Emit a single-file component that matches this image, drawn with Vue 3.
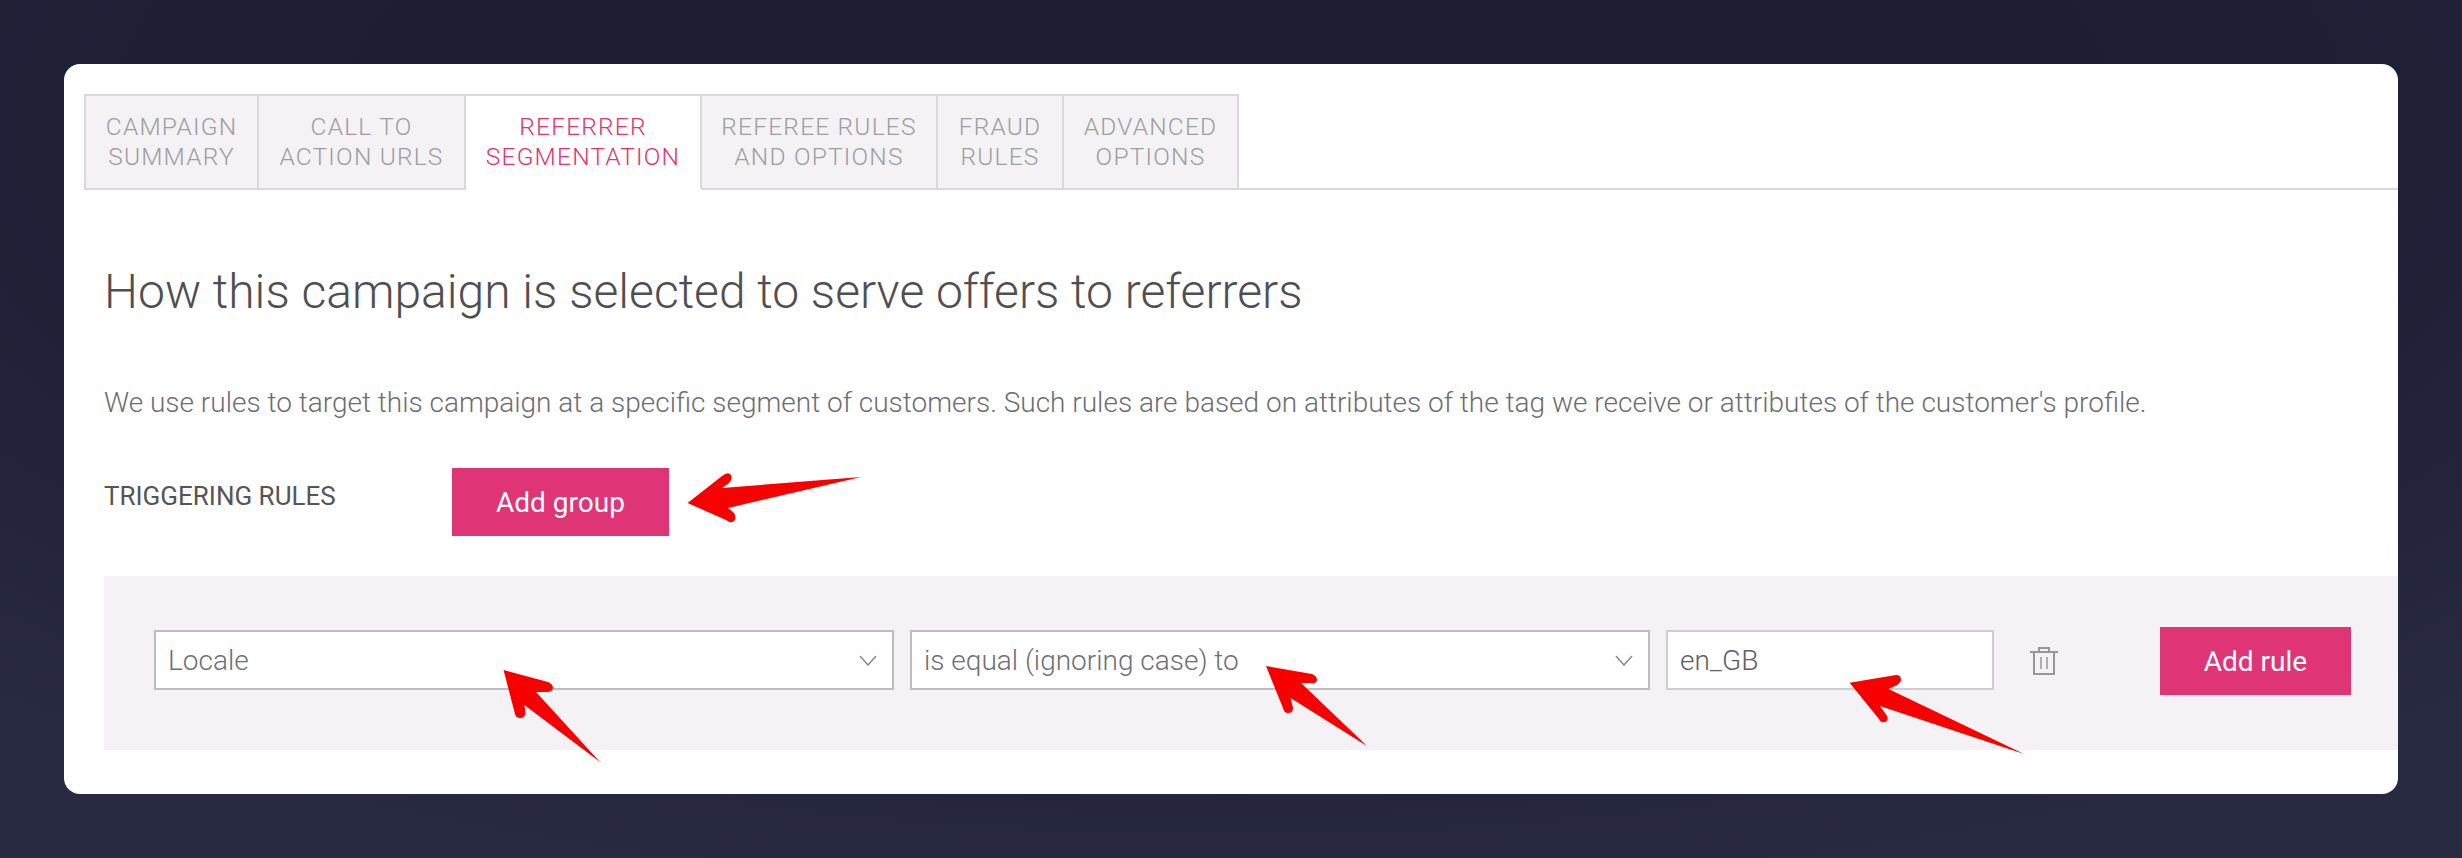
<script setup>
const tabs = [
  { lines: ['CAMPAIGN', 'SUMMARY'], width: 175 },
  { lines: ['CALL TO', 'ACTION URLS'], width: 207 },
  { lines: ['REFERRER', 'SEGMENTATION'], width: 236, active: true },
  { lines: ['REFEREE RULES', 'AND OPTIONS'], width: 236 },
  { lines: ['FRAUD', 'RULES'], width: 126 },
  { lines: ['ADVANCED', 'OPTIONS'], width: 175 }
]
const arrows = [
  'M687.6,503 L722,476 Q728,471 731,475 Q733,479 729,483 L722,488 L861,477 L728,508 L734,513 Q737,518 734,521 Q731,524 726,520 Z',
  'M503.5,670 L548,682 Q553,684 553,688 Q552,692 547,692 L536,692 L600,762 L524.4,705 L525.5,713 Q525,718 520,718 Q516,718 515,714 Z',
  'M1266,666 L1312,674 Q1317,676 1317,680 Q1316,684 1311,683 L1301,683 L1367,746 L1290.6,698 L1293,708 Q1293,713 1288,713 Q1284,713 1283,708 Z',
  'M1849.6,682.7 L1896,675 Q1901,675 1901,680 Q1900,684 1895,686 L1888.5,689 L2024,754 L1880,706 L1887,716 Q1889,720 1885,722 Q1881,723 1879,719 Z'
]
</script>

<template>
  <div class="page">
    <div class="card">
      <div class="tabs">
        <div
          v-for="tab in tabs"
          :key="tab.lines[0]"
          class="tab"
          :class="{ active: tab.active }"
          :style="{ width: tab.width + 'px' }"
        >
          <span v-for="line in tab.lines" :key="line">{{ line }}</span>
        </div>
      </div>
      <div class="content">
        <h1>How this campaign is selected to serve offers to referrers</h1>
        <p>We use rules to target this campaign at a specific segment of customers. Such rules are based on attributes of the tag we receive or attributes of the customer's profile.</p>
        <div class="trigger">
          <div class="label">TRIGGERING RULES</div>
          <button class="btn group-btn">Add group</button>
        </div>
      </div>
      <div class="panel">
        <div class="field select">
          <span>Locale</span>
          <svg width="18" height="11" viewBox="0 0 18 11"><path d="M1 1 L9 10 L17 1" fill="none" stroke="#8a8a8a" stroke-width="1.5" /></svg>
        </div>
        <div class="field select">
          <span>is equal (ignoring case) to</span>
          <svg width="18" height="11" viewBox="0 0 18 11"><path d="M1 1 L9 10 L17 1" fill="none" stroke="#8a8a8a" stroke-width="1.5" /></svg>
        </div>
        <div class="field input"><span>en_GB</span></div>
        <svg class="trash" width="30" height="30" viewBox="0 0 30 30" fill="none" stroke="#97979b" stroke-width="2">
          <path d="M1 6 H29" />
          <path d="M10 6 V2 H20 V6" />
          <path d="M5 6 V28 H25 V6" />
          <path d="M12 11 V23 M18 11 V23" stroke-width="1.5" />
        </svg>
        <button class="btn rule-btn">Add rule</button>
      </div>
    </div>
    <svg class="arrows" width="2462" height="858" viewBox="0 0 2462 858">
      <path v-for="d in arrows" :key="d" :d="d" fill="#f90000" />
    </svg>
  </div>
</template>

<style>
html, body { margin: 0; padding: 0; }
</style>

<style scoped>
.page {
  position: relative;
  box-sizing: border-box;
  width: 2462px;
  height: 858px;
  padding: 64px;
  overflow: hidden;
  font-family: Roboto, "Liberation Sans", sans-serif;
  background: radial-gradient(ellipse 75% 90% at 50% 15%, #1b1b32 0%, #1e1e35 60%, #282a42 100%);
}
.card {
  box-sizing: border-box;
  height: 730px;
  padding-top: 30px;
  background: #fff;
  border-radius: 16px;
  overflow: hidden;
}
.tabs {
  display: flex;
  box-sizing: border-box;
  height: 96px;
  margin-left: 20px;
  border-bottom: 2px solid #d9d8da;
}
.tab {
  display: flex;
  flex: none;
  flex-direction: column;
  align-items: center;
  justify-content: center;
  box-sizing: border-box;
  height: 96px;
  background: #f4f2f5;
  border: 2px solid #d9d8da;
  border-left-width: 0;
  font-size: 24.5px;
  font-weight: 300;
  line-height: 30px;
  letter-spacing: 1.2px;
  color: #9f9da1;
}
.tab:first-child { border-left-width: 2px; }
.tab.active {
  background: #fff;
  border-bottom-color: #fff;
  color: #e0356f;
}
.content { padding: 0 40px; }
h1 {
  margin: 74px 0 0;
  font-size: 48px;
  font-weight: 300;
  line-height: 56px;
  color: #4f4f52;
}
p {
  margin: 66px 0 0;
  font-size: 28px;
  font-weight: 300;
  line-height: 34px;
  color: #6d6d70;
}
.trigger {
  display: flex;
  align-items: flex-start;
  margin-top: 48px;
}
.label {
  width: 348px;
  margin-top: 13px;
  font-size: 26px;
  line-height: 30px;
  color: #555558;
}
.btn {
  box-sizing: border-box;
  height: 68px;
  border: 0;
  padding: 0;
  background: #df3576;
  color: #fff;
  font-family: inherit;
  font-size: 28px;
}
.group-btn { width: 217px; }
.rule-btn { width: 191px; margin-left: 85px; margin-top: 2px; }
.panel {
  display: flex;
  align-items: center;
  gap: 16px;
  box-sizing: border-box;
  height: 174px;
  margin-top: 40px;
  margin-left: 40px;
  padding-left: 50px;
  padding-bottom: 6px;
  background: #f4f2f5;
}
.field {
  display: flex;
  align-items: center;
  justify-content: space-between;
  box-sizing: border-box;
  height: 60px;
  padding: 0 15px 0 12px;
  background: #fff;
  border: 2px solid #bdbcbe;
  font-size: 28px;
  font-weight: 300;
  color: #6f6f72;
}
.select { width: 740px; }
.input {
  width: 328px;
  border-color: #cfcecf;
  color: #5e5e61;
}
.trash { margin-left: 19px; margin-top: 2px; }
.arrows {
  position: absolute;
  left: 0;
  top: 0;
  pointer-events: none;
}
</style>
